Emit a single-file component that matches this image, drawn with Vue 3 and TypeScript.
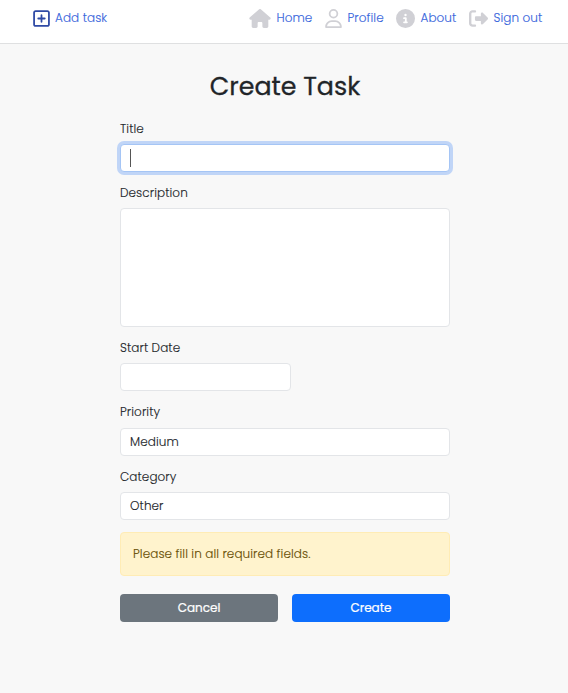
<script setup lang="ts">
import { ref } from 'vue'

const title = ref('')
const description = ref('')
const startDate = ref('')
const priority = ref('Medium')
const category = ref('Other')
</script>

<template>
  <div class="page">
    <header class="navbar">
      <a class="link add">
        <svg class="i-add" viewBox="0 0 448 512"><path d="M64 80c-8.800 0-16 7.200-16 16v320c0 8.800 7.200 16 16 16h320c8.800 0 16-7.200 16-16V96c0-8.800-7.200-16-16-16H64zM0 96c0-35.300 28.700-64 64-64h320c35.300 0 64 28.700 64 64v320c0 35.300-28.700 64-64 64H64c-35.300 0-64-28.700-64-64V96zm200 248v-64h-64c-13.300 0-24-10.700-24-24s10.700-24 24-24h64v-64c0-13.300 10.700-24 24-24s24 10.700 24 24v64h64c13.300 0 24 10.700 24 24s-10.700 24-24 24h-64v64c0 13.300-10.700 24-24 24s-24-10.700-24-24z" /></svg>
        <span>Add task</span>
      </a>
      <nav class="links">
        <a class="link home">
          <svg class="i-home" viewBox="0 0 576 512"><path d="M575.8 255.500c0 18-15 32.100-32 32.100h-32l.7 160.200c0 2.700-.2 5.400-.5 8.100V472c0 22.100-17.900 40-40 40H392c-22.100 0-40-17.900-40-40v-88c0-17.700-14.300-32-32-32h-64c-17.700 0-32 14.300-32 32v88c0 22.100-17.900 40-40 40h-80c-22.100 0-40-17.900-40-40V287.600H32c-18 0-32-14-32-32.100 0-9 3-17 10-24L266.400 8c7-7 15-8 22-8s15 2 21 7l255.400 224.500c8 7 12 15 11 24z" /></svg>
          <span>Home</span>
        </a>
        <a class="link profile">
          <svg class="i-user" viewBox="0 0 448 512"><path d="M304 128a80 80 0 1 0-160 0 80 80 0 1 0 160 0zM96 128a128 128 0 1 1 256 0A128 128 0 1 1 96 128zM49.300 464h349.500c-8.900-63.300-63.300-112-129-112h-91.400c-65.700 0-120.100 48.700-129 112zM0 482.300C0 383.800 79.800 304 178.300 304h91.400C368.200 304 448 383.800 448 482.300c0 16.400-13.300 29.700-29.700 29.700H29.700C13.300 512 0 498.700 0 482.300z" /></svg>
          <span>Profile</span>
        </a>
        <a class="link about">
          <svg class="i-info" viewBox="0 0 512 512"><path d="M256 512A256 256 0 1 0 256 0a256 256 0 1 0 0 512zM216 336h24v-64h-24c-13.300 0-24-10.700-24-24s10.700-24 24-24h48c13.300 0 24 10.700 24 24v88h8c13.300 0 24 10.700 24 24s-10.700 24-24 24h-80c-13.300 0-24-10.700-24-24s10.700-24 24-24zm40-208a32 32 0 1 1 0 64 32 32 0 1 1 0-64z" /></svg>
          <span>About</span>
        </a>
        <a class="link signout">
          <svg class="i-out" viewBox="0 0 512 512"><path d="M377.900 105.900l122.800 122.800c7.200 7.200 11.300 17.100 11.300 27.300s-4.100 20.100-11.300 27.300L377.900 406.100c-6.400 6.400-15 9.900-24 9.900-18.700 0-33.900-15.200-33.900-33.900V320H192c-17.700 0-32-14.300-32-32v-64c0-17.700 14.300-32 32-32h128v-62.100c0-18.700 15.200-33.900 33.900-33.900 9 0 17.600 3.600 24 9.900zM160 96H96c-17.700 0-32 14.300-32 32v256c0 17.700 14.300 32 32 32h64c17.700 0 32 14.300 32 32s-14.300 32-32 32H96c-53 0-96-43-96-96V128C0 75 43 32 96 32h64c17.700 0 32 14.300 32 32s-14.300 32-32 32z" /></svg>
          <span>Sign out</span>
        </a>
      </nav>
    </header>

    <form class="form" @submit.prevent>
      <h1>Create Task</h1>
      <div class="field">
        <label>Title</label>
        <div class="control focused"><span v-if="!title" class="caret"></span>{{ title }}</div>
      </div>
      <div class="field">
        <label>Description</label>
        <div class="control area">{{ description }}</div>
      </div>
      <div class="field">
        <label>Start Date</label>
        <div class="control date">{{ startDate }}</div>
      </div>
      <div class="field">
        <label>Priority</label>
        <div class="control">{{ priority }}</div>
      </div>
      <div class="field">
        <label>Category</label>
        <div class="control">{{ category }}</div>
      </div>
      <div class="alert">Please fill in all required fields.</div>
      <div class="actions">
        <button type="button" class="btn cancel">Cancel</button>
        <button type="submit" class="btn create">Create</button>
      </div>
    </form>
  </div>
</template>

<style>
body {
  background: #f8f8f8;
}
</style>

<style scoped>
.page {
  min-height: 693px;
  font-family: Poppins, Inter, sans-serif;
  font-size: 12px;
  font-weight: 300;
  letter-spacing: 0.080px;
  -webkit-text-stroke: 0.120px currentColor;
  color: #212529;
  background: #f8f8f8;
}
.page * {
  box-sizing: border-box;
}
.navbar {
  display: flex;
  justify-content: space-between;
  height: 44px;
  padding: 8px 25px 0 33px;
  background: #fff;
  border-bottom: 1px solid #dfe0e1;
}
.links {
  display: flex;
}
.link {
  display: flex;
  align-items: center;
  height: 20px;
  color: #3765dc;
  white-space: nowrap;
}
.link svg {
  flex: none;
  height: 19px;
  margin-right: 5.500px;
  fill: #d0d0d5;
}
.link .i-add {
  width: 17px;
  margin-right: 5px;
  fill: #2f4aa5;
}
.i-home { width: 22px; }
.i-user { width: 17px; }
.i-info, .i-out { width: 19px; }
.home { width: 76px; }
.profile { width: 71px; }
.about { width: 73px; }
.signout { width: 74px; }

.form {
  width: 330px;
  margin-left: 120px;
  padding-top: 26px;
}
h1 {
  margin: 0 0 17.500px;
  font-size: 25.300px;
  font-weight: 400;
  letter-spacing: 0;
  -webkit-text-stroke: 0.300px currentColor;
  line-height: 32px;
  text-align: center;
}
.field {
  margin-bottom: 11.700px;
}
label {
  display: block;
  height: 18.400px;
  margin-bottom: 6px;
  line-height: 18.400px;
}
.control {
  display: flex;
  align-items: center;
  height: 28.400px;
  padding: 0 9px;
  background: #fff;
  border: 1px solid #e3e5e8;
  border-radius: 4px;
}
.focused {
  border-color: #a5c5f5;
  box-shadow: 0 0 0 3px #c0d5f7;
}
.caret {
  width: 1px;
  height: 18px;
  background: #555;
}
.area { height: 118.600px; }
.date { width: 171px; }
.alert {
  display: flex;
  align-items: center;
  height: 44px;
  padding: 0 12px;
  color: #664d03;
  background: #fff3cd;
  border: 1px solid #ffecb5;
  border-radius: 4px;
}
.actions {
  display: grid;
  grid-template-columns: 1fr 1fr;
  gap: 14px;
  margin-top: 17.800px;
}
.btn {
  height: 28.500px;
  padding: 0;
  border: 0;
  border-radius: 4px;
  font: inherit;
  font-weight: 400;
  letter-spacing: 0;
  -webkit-text-stroke: 0.200px currentColor;
  color: #fff;
}
.cancel { background: #6c757d; }
.create { background: #0d6efd; }
</style>
